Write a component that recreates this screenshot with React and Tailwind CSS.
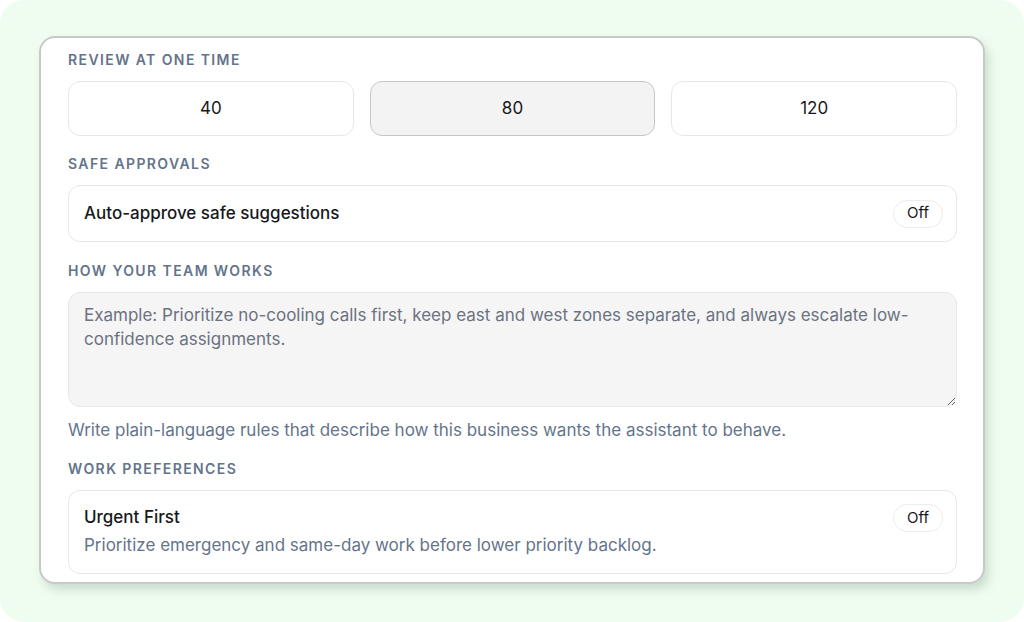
import { useState } from 'react';

const SectionLabel = ({ children }) => (
  <div className="text-sm font-semibold uppercase tracking-[0.1em] text-[#64748b] leading-5 mb-[11px]">
    {children}
  </div>
);

const OffPill = () => (
  <span className="inline-flex items-center justify-center h-7 px-[13px] rounded-full border border-[#ececec] text-[15px] text-[#18181b] bg-white">
    Off
  </span>
);

const App = () => {
  const [batch, setBatch] = useState(80);
  const sizes = [40, 80, 120];

  return (
    <div className="w-[1024px] h-[622px] bg-white" style={{ fontFamily: 'Inter, "Noto Sans", sans-serif' }}>
      <div className="w-full h-full bg-[#effdf0] rounded-[24px] pt-9 pl-[39px]">
        <div className="w-[946px] h-[548px] bg-white border-2 border-[#c9c9c9] rounded-2xl shadow-[4px_6px_10px_rgba(80,110,85,0.22)] overflow-hidden pl-[27px] pr-[26px] pt-3">
          <SectionLabel>Review at one time</SectionLabel>
          <div className="grid grid-cols-3 gap-4">
            {sizes.map((n) => (
              <button
                key={n}
                onClick={() => setBatch(n)}
                className={
                  n === batch
                    ? 'h-[55px] rounded-xl border border-[#c6c6c6] bg-[#f3f3f3] text-[17px] text-[#18181b]'
                    : 'h-[55px] rounded-xl border border-[#e7e7ea] bg-white text-[17px] text-[#18181b]'
                }
              >
                {n}
              </button>
            ))}
          </div>

          <div className="mt-[18px]">
            <SectionLabel>Safe approvals</SectionLabel>
            <div className="h-[57px] rounded-xl border border-[#e7e7ea] flex items-center justify-between pl-[15px] pr-[13px]">
              <span className="text-[17px] font-medium text-[#18181b]">Auto-approve safe suggestions</span>
              <OffPill />
            </div>
          </div>

          <div className="mt-[19px]">
            <SectionLabel>How your team works</SectionLabel>
            <textarea
              className="block w-full h-[115px] rounded-xl border border-[#e7e7ea] bg-[#f5f5f6] px-[15px] py-[10px] text-[17px] leading-6 text-[#18181b] placeholder:text-[#6b7280] outline-none resize-y"
              placeholder="Example: Prioritize no-cooling calls first, keep east and west zones separate, and always escalate low-confidence assignments."
            />
            <p className="mt-[11px] text-[17px] leading-6 text-[#64748b]">
              Write plain-language rules that describe how this business wants the assistant to behave.
            </p>
          </div>

          <div className="mt-[17px]">
            <SectionLabel>Work preferences</SectionLabel>
            <div className="rounded-xl border border-[#e7e7ea] pl-[15px] pr-[13px] pt-[13px] pb-[16px]">
              <div className="flex items-start justify-between">
                <span className="text-[17px] font-medium text-[#18181b] leading-6 mt-[1px]">Urgent First</span>
                <OffPill />
              </div>
              <p className="text-[17px] leading-6 text-[#64748b] mt-[1px]">
                Prioritize emergency and same-day work before lower priority backlog.
              </p>
            </div>
            <div className="mt-2.5 h-16 rounded-xl border border-[#e7e7ea]" />
          </div>
        </div>
      </div>
    </div>
  );
};

export default App;
